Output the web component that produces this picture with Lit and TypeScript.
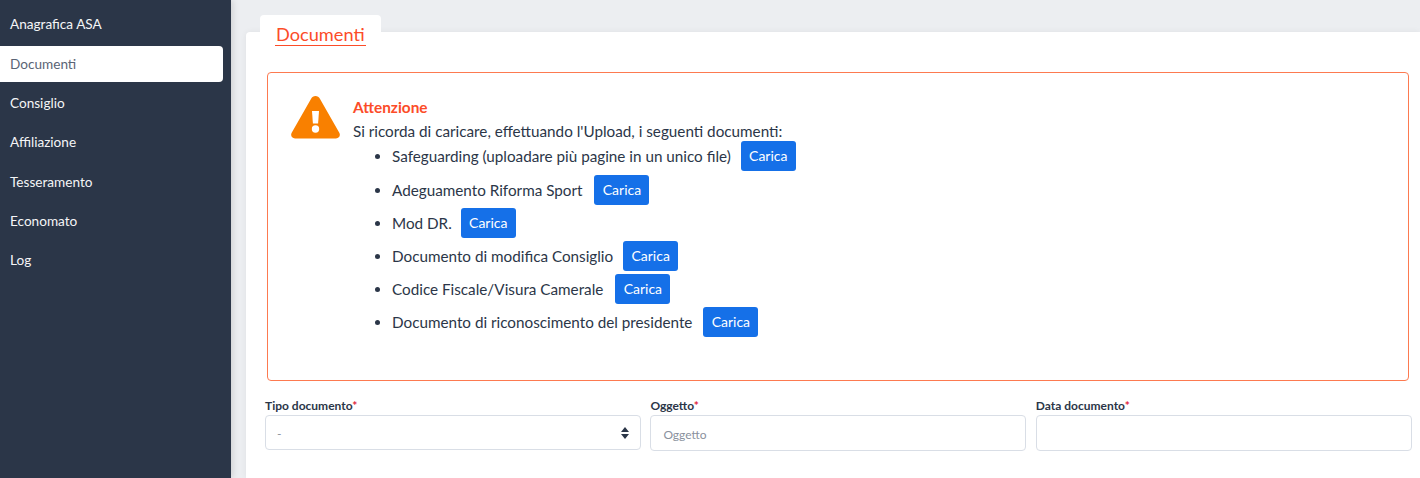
import { LitElement, html, css } from "lit";
import { customElement } from "lit/decorators.js";

const nav = ["Anagrafica ASA", "Documenti", "Consiglio", "Affiliazione", "Tesseramento", "Economato", "Log"];
const docs: [string, number][] = [
  ["Safeguarding (uploadare più pagine in un unico file)", 10],
  ["Adeguamento Riforma Sport", 12],
  ["Mod DR.", 9],
  ["Documento di modifica Consiglio", 10],
  ["Codice Fiscale/Visura Camerale", 12],
  ["Documento di riconoscimento del presidente", 11],
];

@customElement("app-root")
export class AppRoot extends LitElement {
  static styles = css`
    :host { display: block; width: 1420px; height: 478px; overflow: hidden; font-family: Lato, sans-serif; color: #2b3648; background: #eceef1; }
    * { box-sizing: border-box; }
    .layout { display: flex; height: 478px; }
    .side { width: 231px; flex: none; background: #2b3648; padding: 6.2px 8px 0 0; box-shadow: 2px 0 6px rgba(0,0,0,.12); }
    .item { height: 36px; margin-bottom: 3.33px; padding: 0 0 0 10px; display: flex; align-items: center; font-size: 13.6px; color: #f4f5f7; border-radius: 0 4px 4px 0; }
    .item.on { background: #fff; color: #5a6475; }
    .main { flex: 1; padding: 15px 0 0 15px; min-width: 0; }
    .tab { width: 121px; height: 17px; margin-left: 14px; background: #fff; border-radius: 4px 4px 0 0; padding: 8px 0 0 16px; position: relative; z-index: 1; }
    .tab span { display: inline-block; font-size: 18.2px; line-height: 22px; color: #fc4c28; border-bottom: 1px solid #fc4c28; padding: 0 1px; margin-left: -1px; white-space: nowrap; }
    .card { height: 446px; background: #fff; border-radius: 4px 0 0 0; padding: 40px 8px 0 19px; box-shadow: 0 0 6px rgba(0,0,0,.06); }
    .alert { width: 1142px; height: 309px; margin-left: 2px; border: 1px solid #fd7a50; border-radius: 4px; display: flex; padding: 22px 0 0 23px; font-size: 15.25px; line-height: 23px; }
    .tri { flex: none; width: 50px; height: 44px; margin-right: 12px; }
    .title { color: #fc4c28; font-weight: 700; line-height: 24px; font-size: 15.4px; height: 25px; }
    .lead { height: 21.4px; }
    ul { margin: 0; padding: 0 0 0 39px; list-style: disc; }
    li { height: 33.2px; }
    li > div { display: flex; align-items: center; height: 30px; }
    li span { padding-top: 1px; }
    button { border: 0; background: #1570e8; color: #fff; font: 14px/28px Lato, sans-serif; height: 30px; width: 55px; border-radius: 3px; padding: 0; }
    .form { display: grid; grid-template-columns: 376px 376px 376px; column-gap: 9.4px; margin: 16px 0 0 0; }
    label { display: block; font-size: 12px; font-weight: 700; line-height: 16px; height: 18px; padding-top: 1px; color: #2b3648; white-space: nowrap; }
    label i { color: #e0243c; font-style: normal; }
    .box { height: 36px; border: 1px solid #d9dee6; border-radius: 4px; display: flex; align-items: center; justify-content: space-between; padding: 2px 12px 0; font-size: 12px; color: #8a919d; }
    .box.select { height: 35px; padding-left: 11px; }
    .arrows { display: block; width: 8px; height: 12px; margin: -2px -1px 0 0; }
  `;

  render() {
    return html`<div class="layout">
      <nav class="side">${nav.map((n, i) => html`<div class="item ${i === 1 ? "on" : ""}">${n}</div>`)}</nav>
      <main class="main">
        <div class="tab"><span>Documenti</span></div>
        <div class="card">
          <div class="alert">
            <svg class="tri" viewBox="0.5 0 50 44"><path fill="#f98000" d="M25 1c2 0 3.400 1 4.400 2.800l19.400 34c1.500 2.700-.2 5.700-3.300 5.700H4.500c-3.100 0-4.800-3-3.300-5.700l19.400-34C21.600 2 23 1 25 1z"/><path fill="#fff" d="M21.500 16h7l-.9 12.500h-5.200z"/><circle cx="25" cy="34" r="3.700" fill="#fff"/></svg>
            <div>
              <div class="title">Attenzione</div>
              <div class="lead">Si ricorda di caricare, effettuando l'Upload, i seguenti documenti:</div>
              <ul>${docs.map(([d, g]) => html`<li><div style="gap:${g}px"><span>${d}</span><button>Carica</button></div></li>`)}</ul>
            </div>
          </div>
          <div class="form">
            ${["Tipo documento", "Oggetto", "Data documento"].map((l, i) => html`<div>
              <label>${l}<i>*</i></label>
              <div class="box ${i === 0 ? "select" : ""}">${i === 0 ? html`<span>-</span><svg class="arrows" viewBox="0 0 8 12"><path fill="#2b3648" d="M4 0l4 5H0zM4 12L0 7h8z"/></svg>` : i === 1 ? html`<span>Oggetto</span>` : ""}</div>
            </div>`)}
          </div>
        </div>
      </main>
    </div>`;
  }
}
